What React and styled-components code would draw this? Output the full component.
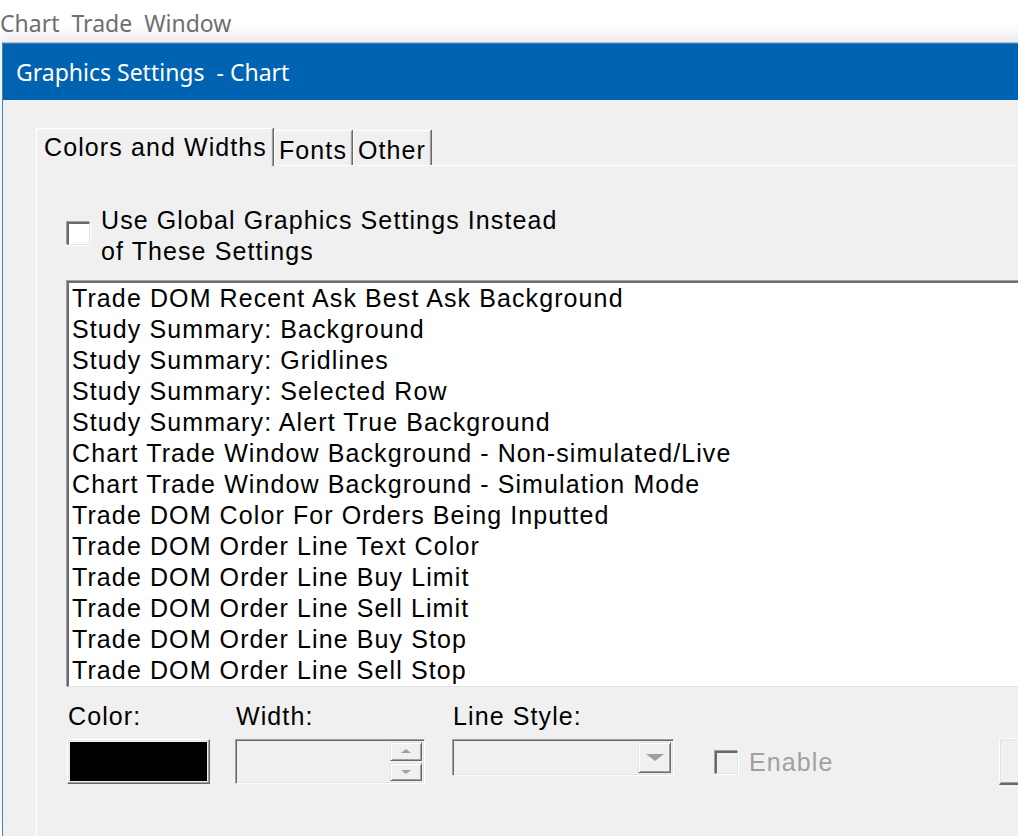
import React from 'react';
import styled, { createGlobalStyle } from 'styled-components';

const GlobalStyle = createGlobalStyle`
  html, body {
    margin: 0;
    padding: 0;
    background: #ffffff;
    overflow: hidden;
  }
`;

const Page = styled.div`
  width: 1018px;
  height: 836px;
  overflow: hidden;
  display: flex;
  flex-direction: column;
  font-family: "Liberation Sans", Arial, sans-serif;
  letter-spacing: 1.1px;
`;

const MenuBar = styled.div`
  height: 34px;
  padding-top: 8px;
  display: flex;
  align-items: flex-start;
  gap: 12px;
  font-family: "Noto Sans", "Open Sans", sans-serif;
  font-size: 23px;
  line-height: 30px;
  letter-spacing: 0;
  color: #6f6f6f;
`;

const Dialog = styled.div`
  flex: 1;
  margin-left: 2px;
  width: 1100px;
  border-left: 1px solid #3b85c6;
  border-top: 1px solid #bdbdbd;
  box-shadow: 0 -8px 12px rgba(0, 0, 0, 0.08);
  display: flex;
  flex-direction: column;
  background: #f0f0f0;
`;

const TitleBar = styled.div`
  height: 56px;
  background: #0063b1;
  border-top: 1px solid #2e7fc4;
  display: flex;
  align-items: center;
  padding-left: 13px;
  font-family: "Noto Sans", "Open Sans", sans-serif;
  font-size: 23px;
  letter-spacing: 0;
  color: #ffffff;
  white-space: pre;
`;

const Body = styled.div`
  flex: 1;
  padding: 28px 0 0 33px;
  display: flex;
  flex-direction: column;
`;

const TabStrip = styled.div`
  display: flex;
  align-items: flex-end;
  height: 37px;
`;

const Tab = styled.div`
  height: ${(p) => (p.$active ? '37px' : '34px')};
  padding: 0 ${(p) => (p.$active ? '5px' : '4px')} 0 ${(p) => (p.$active ? '7px' : '4px')};
  margin-bottom: ${(p) => (p.$active ? '-1px' : '0')};
  background: #f0f0f0;
  border-top: 1px solid #ffffff;
  border-left: 1px solid #ffffff;
  border-right: 1px solid #a0a0a0;
  box-shadow: inset -1px 0 0 #e3e3e3, 1px 0 0 #696969;
  margin-right: 1px;
  font-size: 25px;
  line-height: ${(p) => (p.$active ? '36px' : '38px')};
  color: #000;
  position: relative;
  z-index: ${(p) => (p.$active ? 2 : 1)};
  white-space: nowrap;
`;

const Panel = styled.div`
  flex: 1;
  border-top: 1px solid #ffffff;
  border-left: 1px solid #ffffff;
  padding: 39px 0 0 30px;
  display: flex;
  flex-direction: column;
`;

const CheckRow = styled.label`
  display: flex;
  align-items: flex-start;
  gap: 11px;
  font-size: 25px;
  line-height: 31px;
  color: #000;
`;

const CheckBox = styled.span`
  width: 20px;
  height: 20px;
  flex: none;
  margin-top: ${(p) => p.$top || 0}px;
  background: ${(p) => (p.$disabled ? '#f0f0f0' : '#ffffff')};
  border-top: 2px solid #696969;
  border-left: 2px solid #696969;
  border-right: 1px solid #e3e3e3;
  border-bottom: 1px solid #e3e3e3;
  box-shadow: 1px 1px 0 #ffffff, -1px -1px 0 #a0a0a0;
`;

const ListBox = styled.div`
  margin-top: 14px;
  height: 403px;
  background: #ffffff;
  border-top: 2px solid #6d6d6d;
  border-left: 2px solid #6d6d6d;
  border-bottom: 1px solid #e3e3e3;
  box-shadow: -1px -1px 0 #a0a0a0;
  padding: 0 0 0 3px;
  overflow: hidden;
`;

const ListItem = styled.div`
  font-size: 25px;
  line-height: 31px;
  height: 31px;
  color: #000;
  white-space: nowrap;
`;

const Controls = styled.div`
  display: flex;
  align-items: flex-start;
  margin-top: 15px;
`;

const Field = styled.div`
  display: flex;
  flex-direction: column;
  flex: none;
  margin-left: ${(p) => p.$offset || 0}px;
  width: ${(p) => p.$width}px;
`;

const FieldLabel = styled.div`
  font-size: 25px;
  line-height: 28px;
  color: #000;
  margin-left: 1px;
  height: 37px;
  white-space: nowrap;
`;

const Swatch = styled.div`
  box-sizing: border-box;
  height: 45px;
  border-top: 1px solid #ffffff;
  border-left: 1px solid #ffffff;
  border-right: 1px solid #696969;
  border-bottom: 1px solid #696969;
  box-shadow: inset -1px -1px 0 #a0a0a0, inset 1px 1px 0 #e3e3e3;
  padding: 2px;
  display: flex;
`;

const SwatchFill = styled.div`
  flex: 1;
  background: ${(p) => p.$color};
`;

const Sunken = styled.div`
  height: ${(p) => p.$height}px;
  box-sizing: border-box;
  background: #f0f0f0;
  border-top: 1px solid #a0a0a0;
  border-left: 1px solid #a0a0a0;
  border-right: 1px solid #ffffff;
  border-bottom: 1px solid #ffffff;
  box-shadow: inset 1px 1px 0 #696969, inset -1px -1px 0 #e3e3e3;
  display: flex;
  justify-content: flex-end;
  padding: 2px 2px 2px 0;
`;

const SpinColumn = styled.div`
  width: 32px;
  display: flex;
  flex-direction: column;
  gap: 2px;
`;

const RaisedButton = styled.div`
  flex: ${(p) => (p.$grow ? 1 : 'none')};
  width: ${(p) => p.$width || 'auto'};
  box-sizing: border-box;
  background: #f0f0f0;
  border-top: 1px solid #e3e3e3;
  border-left: 1px solid #e3e3e3;
  border-right: 1px solid #696969;
  border-bottom: 1px solid #696969;
  box-shadow: inset 1px 1px 0 #ffffff, inset -1px -1px 0 #a0a0a0;
  display: flex;
  align-items: center;
  justify-content: center;
`;

const Arrow = styled.span`
  width: 0;
  height: 0;
  border-left: ${(p) => p.$size}px solid transparent;
  border-right: ${(p) => p.$size}px solid transparent;
  ${(p) => (p.$up ? 'border-bottom' : 'border-top')}: ${(p) => Math.round(p.$size * 0.8)}px solid #a0a0a0;
`;

const EnableRow = styled.div`
  display: flex;
  flex: none;
  width: 284px;
  align-items: center;
  gap: 11px;
  margin: 46px 0 0 41px;
  font-size: 25px;
  line-height: 28px;
  color: #a0a0a0;
`;

const SideButton = styled.div`
  flex: none;
  margin-top: 36px;
  width: 120px;
  height: 47px;
  box-sizing: border-box;
  background: #f0f0f0;
  border-top: 1px solid #ffffff;
  border-left: 1px solid #ffffff;
  border-right: 1px solid #696969;
  border-bottom: 2px solid #696969;
  box-shadow: inset 1px 1px 0 #e3e3e3, inset 0 -1px 0 #a0a0a0;
`;

const items = [
  'Trade DOM Recent Ask Best Ask Background',
  'Study Summary: Background',
  'Study Summary: Gridlines',
  'Study Summary: Selected Row',
  'Study Summary: Alert True Background',
  'Chart Trade Window Background - Non-simulated/Live',
  'Chart Trade Window Background - Simulation Mode',
  'Trade DOM Color For Orders Being Inputted',
  'Trade DOM Order Line Text Color',
  'Trade DOM Order Line Buy Limit',
  'Trade DOM Order Line Sell Limit',
  'Trade DOM Order Line Buy Stop',
  'Trade DOM Order Line Sell Stop',
];

const App = () => (
  <Page>
    <GlobalStyle />
    <MenuBar>
      <span>Chart</span>
      <span>Trade</span>
      <span>Window</span>
    </MenuBar>
    <Dialog>
      <TitleBar>Graphics Settings  - Chart</TitleBar>
      <Body>
        <TabStrip>
          <Tab $active>Colors and Widths</Tab>
          <Tab>Fonts</Tab>
          <Tab>Other</Tab>
        </TabStrip>
        <Panel>
          <CheckRow>
            <CheckBox $top={17} />
            <span>
              Use Global Graphics Settings Instead
              <br />
              of These Settings
            </span>
          </CheckRow>
          <ListBox>
            {items.map((item) => (
              <ListItem key={item}>{item}</ListItem>
            ))}
          </ListBox>
          <Controls>
            <Field $width={143}>
              <FieldLabel>Color:</FieldLabel>
              <Swatch>
                <SwatchFill $color="#000000" />
              </Swatch>
            </Field>
            <Field $width={190} $offset={25}>
              <FieldLabel>Width:</FieldLabel>
              <Sunken $height={45}>
                <SpinColumn>
                  <RaisedButton $grow>
                    <Arrow $up $size={5} />
                  </RaisedButton>
                  <RaisedButton $grow>
                    <Arrow $size={5} />
                  </RaisedButton>
                </SpinColumn>
              </Sunken>
            </Field>
            <Field $width={222} $offset={27}>
              <FieldLabel>Line Style:</FieldLabel>
              <Sunken $height={37}>
                <RaisedButton $width="33px">
                  <Arrow $size={9} />
                </RaisedButton>
              </Sunken>
            </Field>
            <EnableRow>
              <CheckBox $disabled />
              <span>Enable</span>
            </EnableRow>
            <SideButton />
          </Controls>
        </Panel>
      </Body>
    </Dialog>
  </Page>
);

export default App;
